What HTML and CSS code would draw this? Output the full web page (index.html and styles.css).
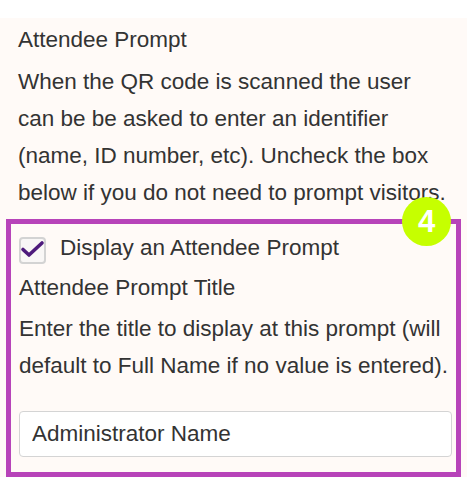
FILE: index.html
```html
<!DOCTYPE html>
<html lang="en">
<head>
  <meta charset="UTF-8" />
  <meta name="viewport" content="width=device-width, initial-scale=1.0"/>
  <title>Attendee Prompt</title>
  <link rel="stylesheet" href="styles.css">
</head>
<body>

  <div class="panel">
    <h3 class="field-title">Attendee Prompt</h3>
    <p class="field-help">When the QR code is scanned the user can be be asked to enter an identifier (name, ID number, etc). Uncheck the box below if you do not need to prompt visitors.</p>

    <div class="highlight">
      <span class="step-badge">4</span>

      <label class="check-row">
        <span class="check-box">
          <svg width="27" height="27" viewBox="0 0 27 27">
            <path d="M4 12.5 L10 18 L23 6" fill="none" stroke="#4e1b7c" stroke-width="3.6" stroke-linecap="round" stroke-linejoin="round"/>
          </svg>
        </span>
        Display an Attendee Prompt
      </label>

      <h3 class="field-title inner">Attendee Prompt Title</h3>
      <p class="field-help inner">Enter the title to display at this prompt (will default to Full Name if no value is entered).</p>

      <input class="text-input" type="text" value="Administrator Name">
    </div>
  </div>

</body>
</html>
```

FILE: styles.css
```css
body {
  font-family: 'Liberation Sans', Arial, sans-serif;
  margin: 0;
  padding: 0;
  background-color: #ffffff;
  color: #333;
}

.panel {
  margin-top: 18px;
  padding: 3px 6px 0 6px;
  background-color: #fffaf7;
}

.field-title {
  margin: 0;
  padding: 0 11px 0 12px;
  font-size: 22.5px;
  font-weight: normal;
  line-height: 37px;
}

.field-help {
  margin: 5px 0 0 0;
  padding: 0 11px 0 12px;
  font-size: 22.5px;
  line-height: 37px;
}

.highlight {
  position: relative;
  margin-top: 8px;
  padding: 5px 4px 15px 8px;
  border: 5px solid #b743b9;
}

.field-title.inner,
.field-help.inner {
  padding: 0;
}

.field-title.inner {
  margin-top: 3px;
}

.field-help.inner {
  margin-top: 4px;
}

.step-badge {
  position: absolute;
  top: -27px;
  right: 5px;
  width: 49px;
  height: 49px;
  border-radius: 50%;
  background-color: #c6ff00;
  color: #fff;
  font-size: 31px;
  font-weight: bold;
  line-height: 50px;
  text-align: center;
}

.check-row {
  display: flex;
  align-items: center;
  gap: 14px;
  font-size: 22.5px;
  line-height: 37px;
}

.check-box {
  display: flex;
  width: 27px;
  height: 27px;
  box-sizing: border-box;
  border: 2px solid #d3d3d3;
  border-radius: 4px;
  background-color: #f9f7f6;
  align-items: center;
  justify-content: center;
  margin-top: 5px;
}

.check-box svg {
  flex: none;
}

.text-input {
  display: block;
  box-sizing: border-box;
  width: 100%;
  height: 46px;
  margin-top: 27px;
  padding: 0 12px;
  border: 1px solid #d4d4d4;
  border-radius: 4px;
  background-color: #fff;
  font-family: 'Liberation Sans', Arial, sans-serif;
  font-size: 22.5px;
  color: #333;
}
```
